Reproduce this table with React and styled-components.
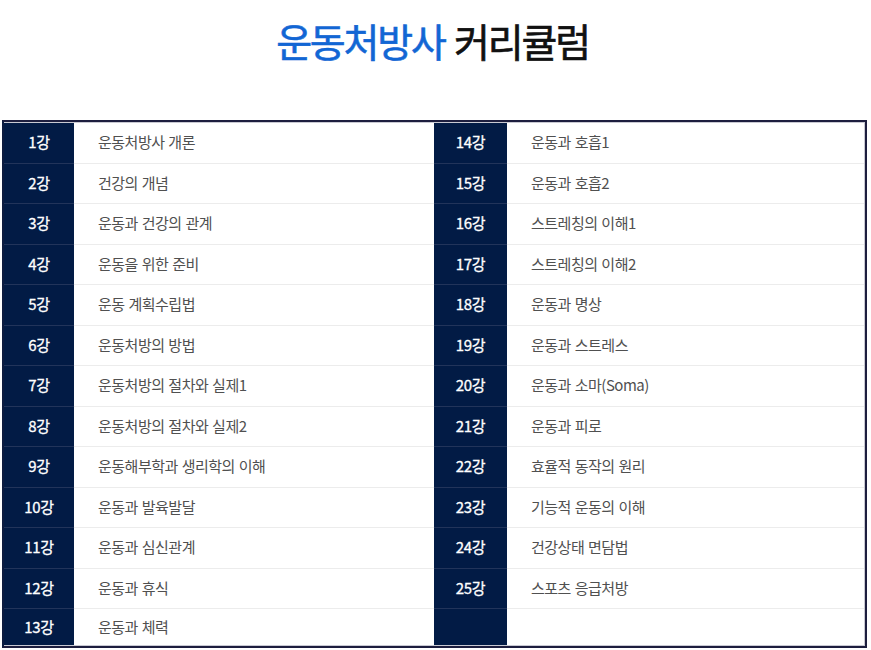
import React from "react";
import styled, { createGlobalStyle } from "styled-components";

const Global = createGlobalStyle`
  html, body { margin: 0; padding: 0; background: #fff; }
  body { font-family: "Noto Sans CJK KR", "Noto Sans", sans-serif; }
`;

const Page = styled.div`
  width: 871px;
  height: 650px;
  overflow: hidden;
  display: flex;
  flex-direction: column;
`;

const Header = styled.header`
  height: 120px;
  display: flex;
  justify-content: center;
  align-items: flex-start;
`;

const Title = styled.h1`
  margin: 13px 0 0 -6px;
  font-size: 39px;
  line-height: 54px;
  font-weight: 400;
  letter-spacing: -2.2px;
  word-spacing: 3px;
  color: #111;
  -webkit-text-stroke: 0.6px currentColor;
`;

const Accent = styled.span`
  color: #1266d4;
`;

const Frame = styled.div`
  margin: 0 4px 0 2px;
  height: 528px;
  box-sizing: border-box;
  border: 2px solid #1d1e3e;
  border-left-color: #0c1b3f;
`;

const Inner = styled.div`
  height: 100%;
  box-sizing: border-box;
  border: 1px solid #c9c9d2;
  border-left: 0;
  display: grid;
  grid-template-columns: 430px 1fr;
`;

const Column = styled.div`
  display: flex;
  flex-direction: column;
`;

const Row = styled.div`
  display: grid;
  grid-template-columns: ${(p) => p.$num}px 1fr;
  height: ${(p) => (p.$last ? "auto" : "40.5px")};
  flex: ${(p) => (p.$last ? "1" : "none")};
`;

const Num = styled.div`
  background: #021b45;
  color: #fff;
  font-size: 15px;
  font-weight: 400;
  letter-spacing: -0.3px;
  -webkit-text-stroke: 0.3px #fff;
  display: flex;
  align-items: center;
  justify-content: center;
  padding-bottom: 2px;
  box-sizing: border-box;
  border-bottom: ${(p) => (p.$last ? "0" : "1px solid #22345a")};
`;

const Subject = styled.div`
  color: #505050;
  font-size: 15px;
  letter-spacing: -0.5px;
  word-spacing: 1px;
  display: flex;
  align-items: center;
  padding: 0 0 2px 24px;
  box-sizing: border-box;
  border-bottom: ${(p) => (p.$last ? "0" : "1px solid #ececec")};
`;

const left = [
  "운동처방사 개론",
  "건강의 개념",
  "운동과 건강의 관계",
  "운동을 위한 준비",
  "운동 계획수립법",
  "운동처방의 방법",
  "운동처방의 절차와 실제1",
  "운동처방의 절차와 실제2",
  "운동해부학과 생리학의 이해",
  "운동과 발육발달",
  "운동과 심신관계",
  "운동과 휴식",
  "운동과 체력",
];

const right = [
  "운동과 호흡1",
  "운동과 호흡2",
  "스트레칭의 이해1",
  "스트레칭의 이해2",
  "운동과 명상",
  "운동과 스트레스",
  "운동과 소마(Soma)",
  "운동과 피로",
  "효율적 동작의 원리",
  "기능적 운동의 이해",
  "건강상태 면담법",
  "스포츠 응급처방",
  "",
];

function Lessons({ items, start, num }) {
  return (
    <Column>
      {items.map((t, i) => {
        const last = i === items.length - 1;
        return (
          <Row key={i} $num={num} $last={last}>
            <Num $last={last}>{t ? `${start + i}강` : ""}</Num>
            <Subject $last={last}>{t}</Subject>
          </Row>
        );
      })}
    </Column>
  );
}

export default function App() {
  return (
    <Page>
      <Global />
      <Header>
        <Title>
          <Accent>운동처방사</Accent> 커리큘럼
        </Title>
      </Header>
      <Frame>
        <Inner>
          <Lessons items={left} start={1} num={70} />
          <Lessons items={right} start={14} num={73} />
        </Inner>
      </Frame>
    </Page>
  );
}
